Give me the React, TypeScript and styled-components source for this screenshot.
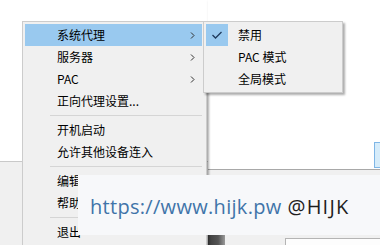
import React from "react";
import styled, { createGlobalStyle } from "styled-components";

const Global = createGlobalStyle`
  html, body { margin: 0; padding: 0; background: #ffffff; }
  body { width: 380px; height: 245px; overflow: hidden; }
`;

const Stage = styled.div`
  position: relative;
  width: 380px;
  height: 245px;
  overflow: hidden;
  display: flex;
  font-family: "Noto Sans CJK SC", "Noto Sans", sans-serif;
`;

const LeftPane = styled.div`
  width: 208px;
  display: flex;
  flex-direction: column;
`;

const WhiteArea = styled.div<{ $h: number; $line: string }>`
  height: ${(p) => p.$h}px;
  background: #ffffff;
  border-bottom: 1px solid ${(p) => p.$line};
  box-shadow: 0 1px 2px rgba(0, 0, 0, 0.08);
  flex: none;
  display: flex;
  justify-content: flex-end;
  align-items: flex-end;
`;

const GrayArea = styled.div`
  flex: 1;
  background: #f0f0f0;
  display: flex;
  align-items: flex-start;
`;

const RightPane = styled.div`
  flex: 1;
  display: flex;
  flex-direction: column;
`;

const BlueTab = styled.div`
  width: 8px;
  height: 24px;
  margin-right: -4px;
  margin-bottom: 1px;
  background: #d6ecfa;
  border: 1px solid #7fb6e6;
`;

const BottomStrip = styled.div`
  display: flex;
  align-items: flex-start;
  padding-top: 64px;
  width: 100%;
`;

const DarkBlock = styled.div`
  width: 17px;
  height: 12px;
  background: linear-gradient(90deg, #3c3c3c 0%, #555 60%, #9a9a9a 100%);
`;

const InputBox = styled.div`
  margin-left: 60px;
  margin-top: 4px;
  flex: 1;
  height: 12px;
  background: #fdfdfd;
  border: 1px solid #b4b4b4;
  border-right: none;
`;

const Menu = styled.div<{ $left: number; $top: number; $width: number }>`
  position: absolute;
  left: ${(p) => p.$left}px;
  top: ${(p) => p.$top}px;
  width: ${(p) => p.$width}px;
  box-sizing: border-box;
  background: #f0f0f0;
  border: 1px solid #cccccc;
  padding: 2px 4px 2px 2px;
  box-shadow: 2px 2px 2px rgba(0, 0, 0, 0.32);
  display: flex;
  flex-direction: column;
`;

const Row = styled.div<{ $active?: boolean }>`
  height: 22px;
  display: flex;
  align-items: center;
  background: ${(p) => (p.$active ? "#99c9ef" : "transparent")};
  font-size: 12px;
  color: #000;
  line-height: 22px;
`;

const IconCol = styled.div<{ $active?: boolean; $w: number }>`
  width: ${(p) => p.$w}px;
  height: 22px;
  flex: none;
  display: flex;
  align-items: center;
  justify-content: center;
  background: ${(p) => (p.$active ? "#99c9ef" : "transparent")};
`;

const Gap = styled.div<{ $w: number }>`
  width: ${(p) => p.$w}px;
  flex: none;
`;

const Label = styled.span`
  flex: 1;
  white-space: nowrap;
`;

const Arrow = styled.span`
  width: 5px;
  margin-right: 7px;
  display: flex;
  align-items: center;
`;

const Separator = styled.div`
  height: 7px;
  display: flex;
  align-items: center;
  padding-left: 25px;
  &::after {
    content: "";
    flex: 1;
    height: 1px;
    background: #d5d5d5;
  }
`;

const Banner = styled.div`
  position: absolute;
  left: 78px;
  top: 175px;
  width: 302px;
  height: 60px;
  box-sizing: border-box;
  background: #f7f8fa;
  display: flex;
  align-items: center;
  padding: 3px 0 0 12px;
  font-family: "Open Sans", "Liberation Sans", sans-serif;
  font-size: 20px;
  white-space: nowrap;
`;

const Link = styled.span`
  color: #3f74a9;
  letter-spacing: 0.3px;
`;

const Handle = styled.span`
  color: #1e1e1e;
  margin-left: 6px;
  letter-spacing: 1.2px;
`;

const Chevron = () => (
  <svg width="5" height="7" viewBox="0 0 5 7">
    <polyline points="1,0.5 4,3.5 1,6.5" fill="none" stroke="#333" strokeWidth="1" />
  </svg>
);

const Check = () => (
  <svg width="12" height="10" viewBox="0 0 12 10">
    <polyline points="1.5,5 4.5,8 10.5,2" fill="none" stroke="#1f3a5c" strokeWidth="1.3" />
  </svg>
);

type Item = { label?: string; sub?: boolean; active?: boolean; sep?: boolean };

const mainItems: Item[] = [
  { label: "系统代理", sub: true, active: true },
  { label: "服务器", sub: true },
  { label: "PAC", sub: true },
  { label: "正向代理设置..." },
  { sep: true },
  { label: "开机启动" },
  { label: "允许其他设备连入" },
  { sep: true },
  { label: "编辑 Python 文件" },
  { label: "帮助" },
  { sep: true },
  { label: "退出" },
];

const subItems = [
  { label: "禁用", checked: true },
  { label: "PAC 模式" },
  { label: "全局模式" },
];

export default function App() {
  return (
    <>
      <Global />
      <Stage>
        <LeftPane>
          <WhiteArea $h={161} $line="#c9c9c9" />
          <GrayArea />
        </LeftPane>
        <RightPane>
          <WhiteArea $h={169} $line="#a8a8a8">
            <BlueTab />
          </WhiteArea>
          <GrayArea>
            <BottomStrip>
              <DarkBlock />
              <InputBox />
            </BottomStrip>
          </GrayArea>
        </RightPane>

        <Menu $left={22} $top={21} $width={185}>
          {mainItems.map((it, i) =>
            it.sep ? (
              <Separator key={i} />
            ) : (
              <Row key={i} $active={it.active}>
                <Gap $w={32} />
                <Label>{it.label}</Label>
                {it.sub && (
                  <Arrow>
                    <Chevron />
                  </Arrow>
                )}
              </Row>
            )
          )}
        </Menu>

        <Menu $left={203} $top={21} $width={140}>
          {subItems.map((it, i) => (
            <Row key={i}>
              <IconCol $w={22} $active={it.checked}>
                {it.checked && <Check />}
              </IconCol>
              <Gap $w={10} />
              <Label>{it.label}</Label>
            </Row>
          ))}
        </Menu>

        <Banner>
          <Link>https://www.hijk.pw</Link>
          <Handle>@HIJK</Handle>
        </Banner>
      </Stage>
    </>
  );
}
